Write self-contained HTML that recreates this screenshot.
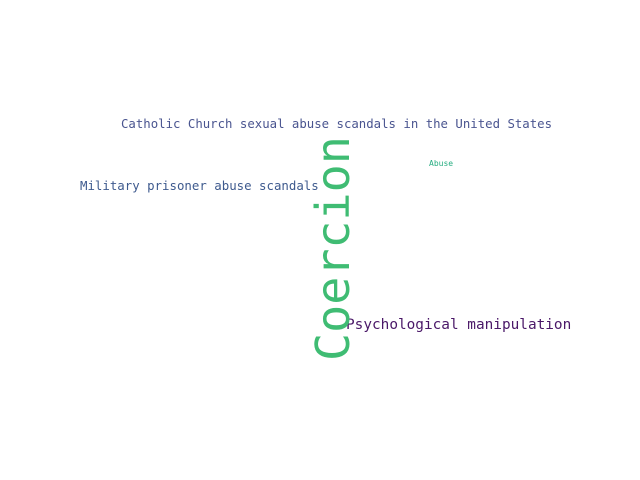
<!DOCTYPE html>
<html><head><meta charset="utf-8"><style>
html,body{margin:0;padding:0;background:#fff;width:640px;height:480px;overflow:hidden}
.w{position:absolute;font-family:"DejaVu Sans Mono","Liberation Mono",monospace;line-height:1;white-space:nowrap}
</style></head><body>
<div class="w" style="left:121px;top:118px;font-size:12.35px;color:#4a5590">Catholic Church sexual abuse scandals in the United States</div>
<div class="w" style="left:80px;top:179.5px;font-size:12.4px;color:#3e5a8e">Military prisoner abuse scandals</div>
<div class="w" style="left:346px;top:318px;font-size:14.4px;color:#4a1868">Psychological manipulation</div>
<div class="w" style="left:429px;top:160px;font-size:8px;color:#27ad81">Abuse</div>
<div class="w" style="left:311px;top:361px;font-size:46.7px;color:#3fbc73;transform-origin:0 0;transform:rotate(-90deg)">Coercion</div>
</body></html>
